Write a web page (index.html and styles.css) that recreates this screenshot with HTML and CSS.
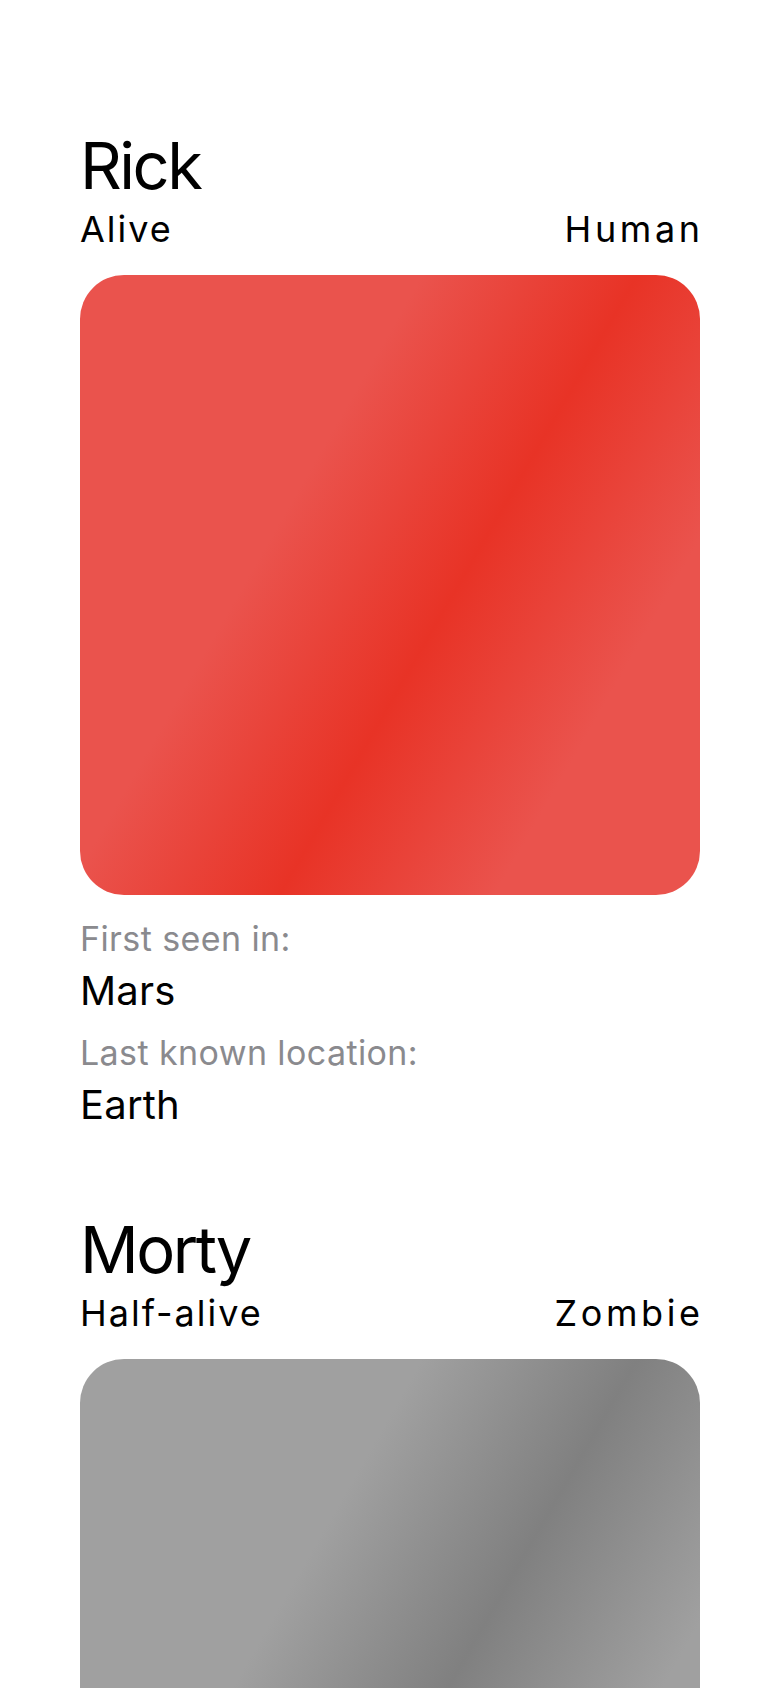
FILE: index.html
```html
<!DOCTYPE html>
<html lang="en">
<head>
<meta charset="utf-8">
<title>Characters</title>
<link rel="stylesheet" href="styles.css">
</head>
<body>
<main class="list">
  <section class="character">
    <h1 class="name">Rick</h1>
    <div class="meta">
      <span class="status">Alive</span>
      <span class="species">Human</span>
    </div>
    <div class="portrait portrait-red"></div>
    <div class="info">
      <div class="group">
        <div class="label">First seen in:</div>
        <div class="value">Mars</div>
      </div>
      <div class="group">
        <div class="label">Last known location:</div>
        <div class="value">Earth</div>
      </div>
    </div>
  </section>
  <section class="character">
    <h1 class="name">Morty</h1>
    <div class="meta">
      <span class="status">Half-alive</span>
      <span class="species">Zombie</span>
    </div>
    <div class="portrait portrait-gray"></div>
  </section>
</main>
</body>
</html>
```

FILE: styles.css
```css
html, body {
  margin: 0;
  padding: 0;
  background: #ffffff;
}

body {
  font-family: Inter, "Liberation Sans", sans-serif;
  color: #000000;
}

.list {
  display: flex;
  flex-direction: column;
  gap: 77px;
  padding: 126px 80px 0;
}

.character {
  display: flex;
  flex-direction: column;
}

.name {
  margin: 0;
  font-size: 65px;
  line-height: 80px;
  font-weight: 400;
  letter-spacing: -2.5px;
}

.meta {
  display: flex;
  justify-content: space-between;
  font-size: 36px;
  line-height: 46px;
}

.status {
  letter-spacing: 2px;
}

.species {
  letter-spacing: 3.6px;
  margin-right: -3.6px;
}

.portrait {
  margin-top: 23px;
  width: 620px;
  height: 620px;
  border-radius: 44px;
}

.portrait-red {
  background: linear-gradient(120deg,
    #ea534d 0%,
    #ea534d 35%,
    #e83326 57%,
    #ea534d 79%,
    #ea534d 100%);
}

.portrait-gray {
  background: linear-gradient(120deg,
    #a0a0a0 0%,
    #a0a0a0 35%,
    #808080 57%,
    #a0a0a0 79%,
    #a0a0a0 100%);
}

.info {
  margin-top: 20px;
  display: flex;
  flex-direction: column;
  gap: 10px;
}

.label {
  font-size: 34px;
  line-height: 48px;
  color: #8a8a8e;
  letter-spacing: 0.4px;
}

.value {
  font-size: 40px;
  line-height: 56px;
  letter-spacing: 0.2px;
}
```
